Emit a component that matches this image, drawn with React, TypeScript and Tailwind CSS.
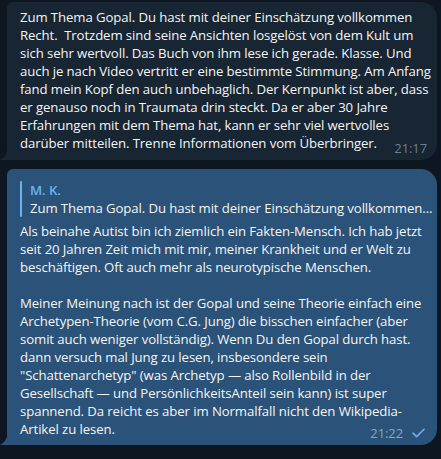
import React from "react";

const Tail = ({ fill }: { fill: string }) => (
    <svg
        className="absolute bottom-0 -left-[7px]"
        width="8"
        height="14"
        viewBox="0 0 8 14"
    >
        <path d="M8 0 V14 H0 C4 12 8 7 8 0 Z" fill={fill} />
    </svg>
);

const Lines = ({ lines }: { lines: string[] }) => (
    <p className="whitespace-nowrap">
        {lines.map((l, i) => (
            <React.Fragment key={i}>
                {l}
                {i < lines.length - 1 && <br />}
            </React.Fragment>
        ))}
    </p>
);

const first = [
    "Zum Thema Gopal. Du hast mit deiner Einschätzung vollkommen",
    "Recht.\u00a0 Trotzdem sind seine Ansichten losgelöst von dem Kult um",
    "sich sehr wertvoll. Das Buch von ihm lese ich gerade. Klasse. Und",
    "auch je nach Video vertritt er eine bestimmte Stimmung. Am Anfang",
    "fand mein Kopf den auch unbehaglich. Der Kernpunkt ist aber, dass",
    "er genauso noch in Traumata drin steckt. Da er aber 30 Jahre",
    "Erfahrungen mit dem Thema hat, kann er sehr viel wertvolles",
    "darüber mitteilen. Trenne Informationen vom Überbringer.",
];

const replyA = [
    "Als beinahe Autist bin ich ziemlich ein Fakten-Mensch. Ich hab jetzt",
    "seit 20 Jahren Zeit mich mit mir, meiner Krankheit und er Welt zu",
    "beschäftigen. Oft auch mehr als neurotypische Menschen.",
];

const replyB = [
    "Meiner Meinung nach ist der Gopal und seine Theorie einfach eine",
    "Archetypen-Theorie (vom C.G. Jung) die bisschen einfacher (aber",
    "somit auch weniger vollständig). Wenn Du den Gopal durch hast.",
    "dann versuch mal Jung zu lesen, insbesondere sein",
    "\"Schattenarchetyp\" (was Archetyp — also Rollenbild in der",
    "Gesellschaft — und PersönlichkeitsAnteil sein kann) ist super",
    "spannend. Da reicht es aber im Normalfall nicht den Wikipedia-",
    "Artikel zu lesen.",
];

export default function App() {
    return (
        <div
            className="w-[441px] h-[459px] bg-[#0e1621] pl-[7px] pr-[4px] pt-[2px] flex flex-col gap-[9px] text-[13.2px] leading-[18px] tracking-[-0.1px] text-[#f5f5f5] overflow-hidden"
            style={{ fontFamily: '"Open Sans", "Noto Sans", sans-serif' }}
        >
            {/* incoming */}
            <div className="relative bg-[#182533] rounded-tl-[6px] rounded-tr-[16px] rounded-br-[16px] pl-[13px] pr-[10px] pt-[6px] pb-[8px]">
                <Lines lines={first} />
                <span className="absolute right-[10px] bottom-[3px] text-[13px] text-[#6d7f8f]">21:17</span>
                <Tail fill="#182533" />
            </div>

            {/* outgoing */}
            <div className="relative bg-[#2b5278] rounded-tl-[6px] rounded-tr-[16px] rounded-br-[16px] pl-[13px] pr-[10px] pt-[12px] pb-[7px]">
                <div className="flex gap-[8px] mb-[5px]">
                    <div className="w-[2px] bg-[#6ab3f3] rounded-full" />
                    <div className="min-w-0 flex-1">
                        <div className="font-semibold text-[#6ab3f3]">M. K.</div>
                        <div className="whitespace-nowrap">Zum Thema Gopal. Du hast mit deiner Einschätzung vollkommen…</div>
                    </div>
                </div>
                <Lines lines={replyA} />
                <div className="h-[18px]" />
                <Lines lines={replyB} />
                <div className="absolute right-[12px] bottom-[3px] flex items-center gap-[9px] text-[13px] text-[#7da8d3]">
                    <span>21:22</span>
                    <svg width="13" height="10" viewBox="0 0 13 10" fill="none">
                        <path d="M1 5.2 L4.6 8.6 L12 1.2" stroke="#6ab3f3" strokeWidth="1.6" strokeLinecap="round" strokeLinejoin="round" />
                    </svg>
                </div>
                <Tail fill="#2b5278" />
            </div>
        </div>
    );
}
